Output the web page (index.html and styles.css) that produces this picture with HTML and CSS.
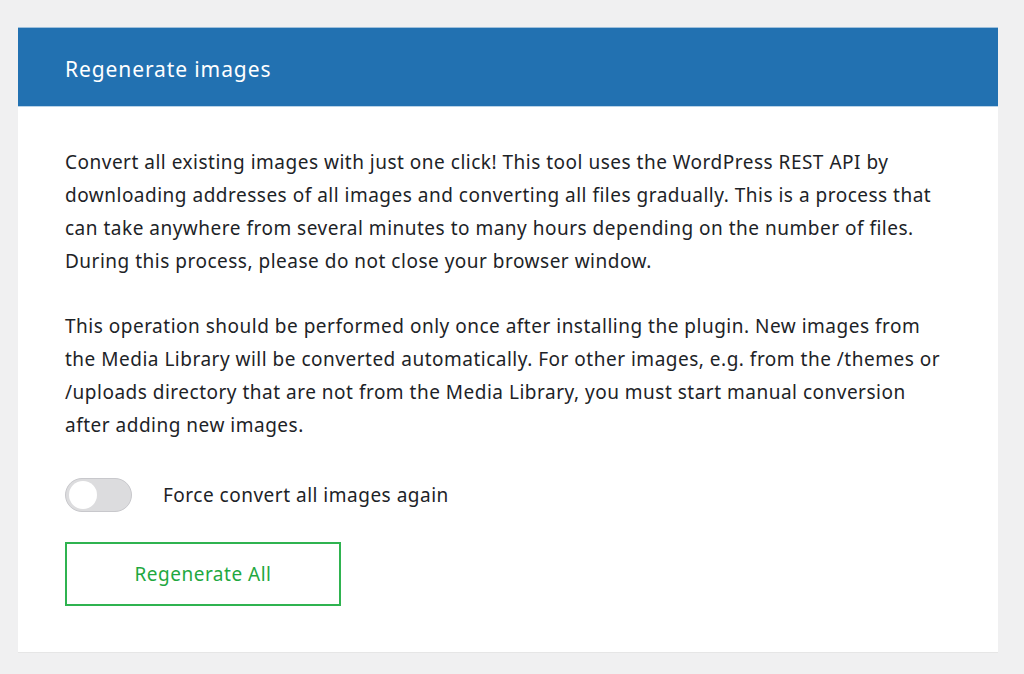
FILE: index.html
```html
<!DOCTYPE html>
<html lang="en">
<head>
<meta charset="utf-8">
<title>Regenerate images</title>
<link rel="stylesheet" href="styles.css">
</head>
<body>
<div class="page">
  <section class="card">
    <header class="card-header">
      <h2 class="card-title">Regenerate images</h2>
    </header>
    <div class="card-body">
      <p class="text">Convert all existing images with just one click! This tool uses the WordPress REST API by downloading addresses of all images and converting all files gradually. This is a process that can take anywhere from several minutes to many hours depending on the number of files. During this process, please do not close your browser window.</p>
      <p class="text">This operation should be performed only once after installing the plugin. New images from the Media Library will be converted automatically. For other images, e.g. from the /themes or /uploads directory that are not from the Media Library, you must start manual conversion after adding new images.</p>
      <label class="toggle-row">
        <span class="toggle"><span class="knob"></span></span>
        <span class="toggle-label">Force convert all images again</span>
      </label>
      <button class="btn" type="button">Regenerate All</button>
    </div>
  </section>
</div>
</body>
</html>
```

FILE: styles.css
```css
html, body {
  margin: 0;
  padding: 0;
  background: #f0f0f1;
}
body {
  font-family: "Noto Sans", "Open Sans", sans-serif;
  color: #1d2327;
}
.page {
  padding: 27px 26px 22px 18px;
}
.card {
  background: #fff;
  border-bottom: 1px solid #e6e6e6;
}
.card-header {
  background: #2271b1;
  height: 80px;
  box-sizing: border-box;
  border-top: 1px solid #9ec0dc;
  border-bottom: 1px solid #b9d3e8;
  display: flex;
  align-items: center;
  padding: 5px 47px 0;
}
.card-title {
  margin: 0;
  color: #fff;
  font-size: 21px;
  letter-spacing: 0.9px;
  font-weight: 400;
  line-height: 1;
}
.card-body {
  padding: 39px 53px 46px 47px;
}
.text {
  margin: 0 0 32px;
  font-size: 19px;
  letter-spacing: 0.5px;
  line-height: 33px;
}
.toggle-row {
  display: flex;
  align-items: center;
  margin-top: 36px;
}
.toggle {
  width: 67px;
  height: 34px;
  box-sizing: border-box;
  border: 1px solid #c8c8cc;
  border-radius: 17px;
  background: #dcdcde;
  position: relative;
  flex: none;
}
.knob {
  position: absolute;
  left: 3px;
  top: 2px;
  width: 28px;
  height: 28px;
  border-radius: 50%;
  background: #fff;
}
.toggle-label {
  margin-left: 31px;
  font-size: 19px;
  letter-spacing: 0.5px;
}
.btn {
  display: block;
  margin-top: 30px;
  width: 276px;
  height: 64px;
  background: #fff;
  border: 2px solid #2fb350;
  color: #1fa83f;
  font-family: "Noto Sans", "Open Sans", sans-serif;
  font-size: 19px;
  letter-spacing: 0.5px;
  cursor: pointer;
}
```
